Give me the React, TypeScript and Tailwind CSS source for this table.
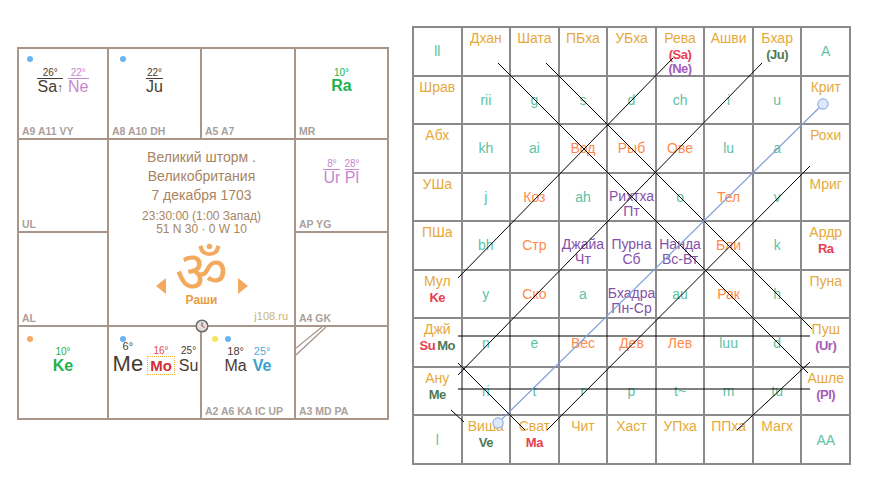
import React from "react";

const GOLD = "text-[#e6a93a]";
const TEAL = "text-[#5ec2a6]";
const ORG = "text-[#ff8a4c]";
const PUR = "text-[#8552a8]";
const RED = "text-[#e8404f]";
const GRN = "text-[#4d7a55]";
const PURB = "text-[#a65cb8]";

type Seg = [string, string];
type Cell =
  | { k: "n"; main: string; subs: Seg[][] }
  | { k: "c"; main: string; color: string }
  | { k: "t"; a: string; b: string };

const n = (main: string, ...subs: Seg[][]): Cell => ({ k: "n", main, subs });
const c = (main: string, color: string = TEAL): Cell => ({ k: "c", main, color });
const t = (a: string, b: string): Cell => ({ k: "t", a, b });

const rows: Cell[][] = [
  [c("ll"), n("Дхан"), n("Шата"), n("ПБха"), n("УБха"), n("Рева", [["(Sa)", RED]], [["(Ne)", PURB]]), n("Ашви"), n("Бхар", [["(Ju)", GRN]]), c("A")],
  [n("Шрав"), c("rii"), c("g"), c("s"), c("d"), c("ch"), c("i"), c("u"), n("Крит")],
  [n("Абх"), c("kh"), c("ai"), c("Вод", ORG), c("Рыб", ORG), c("Ове", ORG), c("lu"), c("a"), n("Рохи")],
  [n("УШа"), c("j"), c("Коз", ORG), c("ah"), t("Рихтха", "Пт"), c("o"), c("Тел", ORG), c("v"), n("Мриг")],
  [n("ПШа"), c("bh"), c("Стр", ORG), t("Джайа", "Чт"), t("Пурна", "Сб"), t("Нанда", "Вс-Вт"), c("Бли", ORG), c("k"), n("Ардр", [["Ra", RED]])],
  [n("Мул", [["Ke", RED]]), c("y"), c("Ско", ORG), c("a"), t("Бхадра", "Пн-Ср"), c("au"), c("Рак", ORG), c("h"), n("Пуна")],
  [n("Джй", [["Su", RED], ["Mo", GRN]]), c("n"), c("e"), c("Вес", ORG), c("Дев", ORG), c("Лев", ORG), c("luu"), c("d"), n("Пуш", [["(Ur)", PURB]])],
  [n("Ану", [["Me", GRN]]), c("ri"), c("t"), c("r"), c("p"), c("t~"), c("m"), c("tu"), n("Ашле", [["(Pl)", PURB]])],
  [c("l"), n("Виша", [["Ve", GRN]]), n("Сват", [["Ma", RED]]), n("Чит"), n("Хаст"), n("УПха"), n("ППха"), n("Магх"), c("AA")],
];

function GridCell({ cell }: { cell: Cell }) {
  if (cell.k === "c") {
    return (
      <div className={`bg-white flex items-center justify-center text-[14px] leading-[16px] ${cell.color}`}>
        {cell.main}
      </div>
    );
  }
  if (cell.k === "t") {
    return (
      <div className={`bg-white flex flex-col items-center pt-[15px] text-[14px] leading-[15px] ${PUR} whitespace-nowrap`}>
        <span>{cell.a}</span>
        <span>{cell.b}</span>
      </div>
    );
  }
  return (
    <div className="bg-white flex flex-col items-center pt-[2px]">
      <span className={`text-[14px] leading-[16px] ${GOLD}`}>{cell.main}</span>
      {cell.subs.map((line, i) => (
        <span key={i} className={`text-[13px] leading-[14px] font-bold tracking-[-0.5px] whitespace-nowrap ${i === 0 ? "mt-[2px]" : ""}`}>
          {line.map(([txt, col], j) => (
            <span key={j} className={`${col} ${j > 0 ? "ml-[2px]" : ""}`}>
              {txt}
            </span>
          ))}
        </span>
      ))}
    </div>
  );
}

function Dot({ color }: { color: string }) {
  return <span className={`block w-[6px] h-[6px] rounded-full ${color}`} />;
}

function Label({ children }: { children: React.ReactNode }) {
  return (
    <div className="mt-auto pl-[3px] pb-[1px] text-[10.5px] leading-[12px] font-bold text-[#aa9f9a] whitespace-nowrap">
      {children}
    </div>
  );
}

function Planet({
  deg,
  name,
  line,
  degCls,
  nameCls,
}: {
  deg: string;
  name: React.ReactNode;
  line?: boolean;
  degCls: string;
  nameCls: string;
}) {
  return (
    <div className="flex flex-col items-center">
      <span className={`text-[10px] leading-[11px] ${degCls}`}>{deg}</span>
      <span className={`${nameCls} ${line ? "border-t border-current" : ""}`}>{name}</span>
    </div>
  );
}

function Clock() {
  return (
    <svg width="14" height="14" viewBox="0 0 14 14">
      <circle cx="7" cy="7" r="5.8" fill="#e4e0e0" stroke="#6f6a6a" strokeWidth="1.5" />
      <line x1="7" y1="7" x2="7" y2="3.3" stroke="#555" strokeWidth="1" />
      <line x1="7" y1="7" x2="9.5" y2="8.5" stroke="#d04050" strokeWidth="1" />
    </svg>
  );
}

function Tri({ dir }: { dir: "l" | "r" }) {
  return (
    <svg width="10" height="16" viewBox="0 0 10 16">
      {dir === "l" ? <polygon points="10,0 10,16 0,8" fill="#f3a95e" /> : <polygon points="0,0 0,16 10,8" fill="#f3a95e" />}
    </svg>
  );
}

function LeftChart() {
  const DARK = "text-[#4a3c30]";
  const NE = "text-[#c986d0]";
  const GR = "text-[#22b14c]";
  return (
    <div className="ml-[17px] mt-[47px] grid grid-cols-[88px_91px_92px_91px] grid-rows-[89px_91px_92px_91px] gap-[2px] p-[2px] bg-[#a8968b]">
      {/* row 1 */}
      <div className="bg-white flex flex-col">
        <div className="flex gap-[7px] h-[6px] mt-[7px] ml-[8px]">
          <Dot color="bg-[#6cb4f0]" />
        </div>
        <div className="flex justify-center gap-[5px] mt-[5px]">
          <Planet deg="26°" degCls={DARK} line nameCls={`text-[16px] leading-[15px] ${DARK}`} name={<>Sa<span className="text-[12px]">↑</span></>} />
          <Planet deg="22°" degCls={NE} line nameCls={`text-[16px] leading-[15px] ${NE}`} name="Ne" />
        </div>
        <Label>A9 A11 VY</Label>
      </div>
      <div className="bg-white flex flex-col">
        <div className="flex gap-[7px] h-[6px] mt-[7px] ml-[11px]">
          <Dot color="bg-[#6cb4f0]" />
        </div>
        <div className="flex justify-center gap-[5px] mt-[5px]">
          <Planet deg="22°" degCls={DARK} line nameCls={`text-[16px] leading-[15px] ${DARK}`} name="Ju" />
        </div>
        <Label>A8 A10 DH</Label>
      </div>
      <div className="bg-white flex flex-col">
        <Label>A5 A7</Label>
      </div>
      <div className="bg-white flex flex-col">
        <div className="h-[6px] mt-[7px]" />
        <div className="flex justify-center gap-[5px] mt-[5px]">
          <Planet deg="10°" degCls={GR} nameCls={`text-[16px] leading-[15px] font-bold ${GR}`} name="Ra" />
        </div>
        <Label>MR</Label>
      </div>
      {/* row 2 */}
      <div className="bg-white flex flex-col">
        <Label>UL</Label>
      </div>
      <div className="col-span-2 row-span-2 bg-white relative flex flex-col items-center pt-[8px] text-[#a8845f]">
        <div className="text-[14px] leading-[19px] text-center">
          Великий шторм .
          <br />
          Великобритания
          <br />7 декабря 1703
        </div>
        <div className="text-[12px] leading-[13px] text-center mt-[5px]">
          23:30:00 (1:00 Запад)
          <br />
          51 N 30 · 0 W 10
        </div>
        <div className="flex items-end justify-between w-[92px] mt-[14px] h-[44px]">
          <Tri dir="l" />
          <div className="self-start h-[40px] text-[58px] leading-[40px] text-[#f3a95e] font-['Noto_Sans','DejaVu_Sans',sans-serif]">
            ॐ
          </div>
          <Tri dir="r" />
        </div>
        <div className="text-[12px] font-bold text-[#eb9d45] leading-[14px] mt-[-1px]">Раши</div>
        <div className="mt-auto self-end pr-[6px] pb-[3px] text-[11px] leading-[12px] text-[#c9b479]">j108.ru</div>
        <div className="absolute bottom-[-8px] left-1/2 -translate-x-1/2">
          <Clock />
        </div>
      </div>
      <div className="bg-white flex flex-col">
        <div className="h-[6px] mt-[7px]" />
        <div className="flex justify-center gap-[4px] mt-[5px]">
          <Planet deg="8°" degCls={NE} line nameCls={`text-[16px] leading-[15px] ${NE}`} name="Ur" />
          <Planet deg="28°" degCls={NE} line nameCls={`text-[16px] leading-[15px] ${NE}`} name="Pl" />
        </div>
        <Label>AP YG</Label>
      </div>
      {/* row 3 */}
      <div className="bg-white flex flex-col">
        <Label>AL</Label>
      </div>
      <div className="bg-white flex flex-col">
        <Label>A4 GK</Label>
      </div>
      {/* row 4 */}
      <div className="bg-white flex flex-col">
        <div className="flex gap-[7px] h-[6px] mt-[9px] ml-[8px]">
          <Dot color="bg-[#f7a862]" />
        </div>
        <div className="flex justify-center gap-[5px] mt-[4px]">
          <Planet deg="10°" degCls={GR} nameCls={`text-[16px] leading-[17px] font-bold ${GR}`} name="Ke" />
        </div>
        <Label>&nbsp;</Label>
      </div>
      <div className="bg-white flex flex-col">
        <div className="flex gap-[7px] h-[6px] mt-[9px] ml-[11px]">
          <Dot color="bg-[#6cb4f0]" />
        </div>
        <div className="flex justify-center items-end gap-[4px] mt-[-1px] ml-[2px]">
          <Planet deg="6°" degCls={`${DARK} text-[11px]`} nameCls={`text-[22px] leading-[24px] ${DARK}`} name="Me" />
          <div className="flex flex-col items-center">
            <span className="text-[10px] leading-[11px] text-[#e04848]">16°</span>
            <span className="text-[15px] leading-[15px] font-bold text-[#d0303a] border-[1.5px] border-dotted border-[#f4b030] px-[2px] py-[1px] mb-[1px]">
              Mo
            </span>
          </div>
          <Planet deg="25°" degCls={DARK} nameCls={`text-[16px] leading-[20px] ${DARK}`} name="Su" />
        </div>
        <Label>&nbsp;</Label>
      </div>
      <div className="bg-white flex flex-col">
        <div className="flex gap-[7px] h-[6px] mt-[9px] ml-[10px]">
          <Dot color="bg-[#f7e45a]" />
          <Dot color="bg-[#6cb4f0]" />
        </div>
        <div className="flex justify-center items-end gap-[6px] mt-[4px]">
          <Planet deg="18°" degCls={`${DARK} text-[11px]`} nameCls={`text-[16px] leading-[17px] ${DARK}`} name="Ma" />
          <Planet deg="25°" degCls="text-[#4aaee0] text-[11px]" nameCls="text-[16px] leading-[17px] font-bold text-[#379fd0]" name="Ve" />
        </div>
        <Label>A2 A6 KA IC UP</Label>
      </div>
      <div className="bg-white flex flex-col relative">
        <svg className="absolute left-0 top-0" width="32" height="32" viewBox="0 0 32 32">
          <line x1="0" y1="21" x2="26" y2="0" stroke="#a8968b" strokeWidth="1.3" />
          <line x1="0" y1="28" x2="30" y2="0" stroke="#a8968b" strokeWidth="1.3" />
        </svg>
        <Label>A3 MD PA</Label>
      </div>
    </div>
  );
}

function RightGrid() {
  const black: [number, number, number, number][] = [
    [498, 63, 808, 373],
    [546, 63, 812, 329],
    [673, 58, 458, 278],
    [762, 63, 458, 375],
    [810, 166, 547, 430],
    [810, 362, 737, 430],
    [458, 336, 810, 336],
    [458, 389, 810, 389],
    [458, 363, 525, 430],
    [451, 410, 464, 422],
  ];
  return (
    <div className="relative ml-[23px] mt-[26px] w-[439px] h-[439px]">
      <div className="w-full h-full grid grid-cols-9 grid-rows-9 gap-[2px] p-[2px] bg-[#8a8a8a]">
        {rows.flat().map((cell, i) => (
          <GridCell key={i} cell={cell} />
        ))}
      </div>
      <svg className="absolute inset-0 pointer-events-none" width="439" height="439" viewBox="412 26 439 439">
        {black.map(([x1, y1, x2, y2], i) => (
          <line key={i} x1={x1} y1={y1} x2={x2} y2={y2} stroke="#000" strokeWidth="1" />
        ))}
        <line x1="823" y1="104" x2="498" y2="423" stroke="#7f9fd8" strokeWidth="1.2" />
        <circle cx="823" cy="104" r="5.2" fill="#dde8fc" stroke="#86a6e0" strokeWidth="1" />
        <circle cx="498" cy="423" r="5.2" fill="#dde8fc" stroke="#86a6e0" strokeWidth="1" />
      </svg>
    </div>
  );
}

export default function App() {
  return (
    <div className="w-[869px] h-[477px] bg-white flex items-start font-['Liberation_Sans',Arial,sans-serif] overflow-hidden">
      <LeftChart />
      <RightGrid />
    </div>
  );
}
